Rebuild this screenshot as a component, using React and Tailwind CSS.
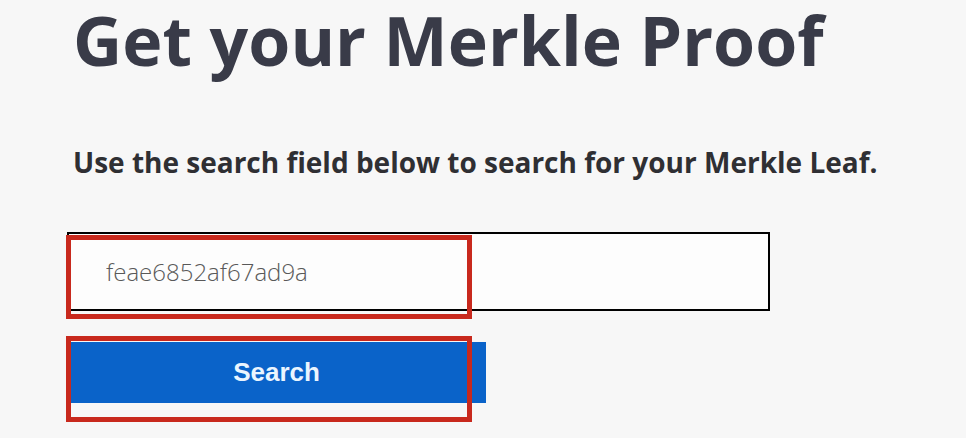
import { useState } from 'react';

const App = () => {
  const [leaf, setLeaf] = useState('feae6852af67ad9a');

  return (
    <div className="relative w-[966px] h-[438px] overflow-hidden bg-[#f7f7f7] font-['Open_Sans',sans-serif]">
      <div className="pl-[73px]">
        <h1 className="text-[68px] leading-[1.18] font-bold text-[#393b48] whitespace-nowrap">
          Get your Merkle Proof
        </h1>
        <p className="mt-[63px] text-[28px] leading-[1.36] font-bold text-[#2f2f33] whitespace-nowrap">
          Use the search field below to search for your Merkle Leaf.
        </p>
      </div>

      {/* Поле поиска и кнопка */}
      <div className="pl-[67px] mt-[51px] flex flex-col">
        <input
          type="text"
          value={leaf}
          onChange={(e) => setLeaf(e.target.value)}
          className="w-[703px] h-[79px] border-2 border-black bg-[#fdfdfd] pl-[37px] text-[24px] font-light text-[#595959] outline-none"
        />
        <button className="mt-[31px] w-[419px] h-[61px] bg-[#0a63c9] text-[#eaf5ff] text-[26px] font-bold font-['Liberation_Sans',Arial,sans-serif]">
          Search
        </button>
      </div>

      {/* Красные рамки-выделения поверх */}
      <div className="absolute left-[66px] top-[235px] w-[406px] h-[84px] border-[5px] border-[#c8291d] pointer-events-none" />
      <div className="absolute left-[66px] top-[336px] w-[406px] h-[86px] border-[5px] border-[#c8291d] pointer-events-none" />
    </div>
  );
};

export default App;
